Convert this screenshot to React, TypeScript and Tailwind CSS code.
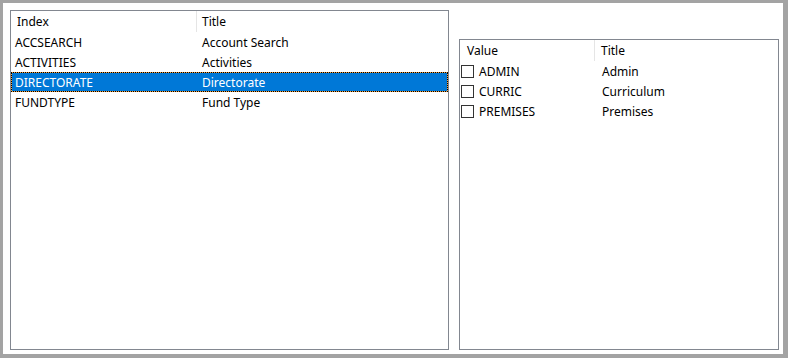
import React from "react";

const font = { fontFamily: '"Noto Sans", "Open Sans", sans-serif' };

const leftRows = [
  ["ACCSEARCH", "Account Search"],
  ["ACTIVITIES", "Activities"],
  ["DIRECTORATE", "Directorate"],
  ["FUNDTYPE", "Fund Type"],
];

const rightRows = [
  ["ADMIN", "Admin"],
  ["CURRIC", "Curriculum"],
  ["PREMISES", "Premises"],
];

export default function App() {
  return (
    <div
      className="w-[788px] h-[358px] bg-[#a3a3a3] pt-[3px] pl-[3px] pr-[5px] pb-[4px] text-[12px] text-black"
      style={font}
    >
      <div className="w-full h-full bg-white flex pl-[7px] pt-[7px] pr-[4px] pb-[4px] gap-[10px]">
        {/* Left list */}
        <div className="w-[439px] h-full border border-[#828790] bg-white flex flex-col">
          <div className="flex h-[21px] items-center">
            <div className="w-[186px] h-full flex items-center pl-[6px] pt-[1px] border-r border-[#e5e5e5]">Index</div>
            <div className="flex-1 h-full flex items-center pl-[5px] pt-[1px]">Title</div>
          </div>
          {leftRows.map(([a, b], i) => {
            const sel = i === 2;
            return (
              <div
                key={a}
                className={
                  "relative flex h-[20px] items-center pt-[1px] " +
                  (sel ? "bg-[#0078d7] text-white" : "")
                }
              >
                {sel && (
                  <div className="absolute inset-0 border border-[#f0a040]">
                    <div className="absolute inset-[-1px] border border-dotted border-black" />
                  </div>
                )}
                <div className="w-[186px] pl-[4px] relative">{a}</div>
                <div className="flex-1 pl-[5px] relative">{b}</div>
              </div>
            );
          })}
        </div>
        {/* Right list */}
        <div className="w-[320px] mt-[29px] border border-[#828790] bg-white flex flex-col">
          <div className="flex h-[21px] items-center">
            <div className="w-[135px] h-full flex items-center pl-[7px] pt-[1px] border-r border-[#e5e5e5]">Value</div>
            <div className="flex-1 h-full flex items-center pl-[6px] pt-[1px]">Title</div>
          </div>
          {rightRows.map(([a, b]) => (
            <div key={a} className="flex h-[20px] items-center">
              <div className="w-[136px] flex items-center pl-[1px]">
                <span className="w-[13px] h-[13px] border border-[#333333] bg-white mr-[5px]" />
                <span className="pt-[1px]">{a}</span>
              </div>
              <div className="flex-1 pl-[6px] pt-[1px]">{b}</div>
            </div>
          ))}
        </div>
      </div>
    </div>
  );
}
